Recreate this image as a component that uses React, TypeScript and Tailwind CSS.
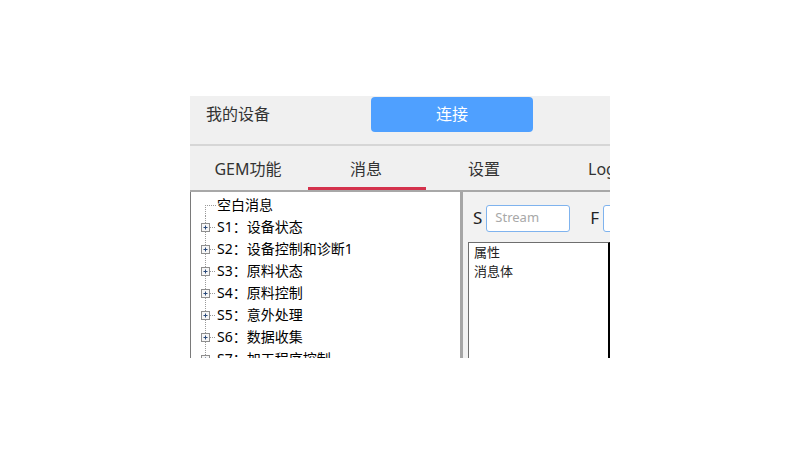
import React from 'react';

const TREE_ITEMS = [
  { label: '空白消息', leaf: true },
  { label: 'S1：设备状态' },
  { label: 'S2：设备控制和诊断1' },
  { label: 'S3：原料状态' },
  { label: 'S4：原料控制' },
  { label: 'S5：意外处理' },
  { label: 'S6：数据收集' },
  { label: 'S7：加工程序控制' },
];

const TABS = ['GEM功能', '消息', '设置', 'Log'];

function TreeConnector({ leaf, first }: { leaf?: boolean; first?: boolean }) {
  return (
    <svg width="26" height="22" viewBox="0 0 26 22" className="shrink-0">
      <line
        x1="14.5"
        y1={first ? 11 : 0}
        x2="14.5"
        y2="22"
        stroke="#9a9a9a"
        strokeWidth="1"
        strokeDasharray="1 1"
      />
      {leaf ? (
        <line x1="14" y1="11.5" x2="25" y2="11.5" stroke="#9a9a9a" strokeWidth="1" strokeDasharray="1 1" />
      ) : (
        <>
          <line x1="19" y1="11.5" x2="25" y2="11.5" stroke="#9a9a9a" strokeWidth="1" strokeDasharray="1 1" />
          <rect x="10.5" y="7.5" width="8" height="8" fill="#f6f6f6" stroke="#8e8e8e" strokeWidth="1" />
          <line x1="12.5" y1="11.5" x2="16.5" y2="11.5" stroke="#2a4a7a" strokeWidth="1" />
          <line x1="14.5" y1="9.5" x2="14.5" y2="13.5" stroke="#2a4a7a" strokeWidth="1" />
        </>
      )}
    </svg>
  );
}

export default function App() {
  return (
    <div className="w-[800px] h-[453px] bg-white pt-[96px] pl-[190px] font-['Noto_Sans','Noto_Sans_CJK_SC',sans-serif]">
      <div className="w-[420px] h-[262px] bg-[#f0f0f0] overflow-hidden flex flex-col">
        {/* Header */}
        <div className="h-[50px] shrink-0 flex items-start pt-[1px] border-b-2 border-[#d6d6d6]">
          <div className="w-[181px] pl-[16px] h-[35px] leading-[35px] text-[16px] text-[#333]">我的设备</div>
          <button className="w-[162px] h-[35px] rounded-[4px] bg-[#4fa0ff] text-white text-[16px] leading-[35px]">
            连接
          </button>
        </div>

        {/* Tabs */}
        <div className="h-[46px] shrink-0 flex border-b-2 border-[#a8a8a8]">
          {TABS.map((tab, i) => (
            <div
              key={tab}
              className={`w-[118px] shrink-0 flex items-center justify-center pt-[4px] pr-[2px] text-[16px] text-[#333] ${
                i === 1 ? 'border-b-[3px] border-[#d4324c]' : 'border-b-[3px] border-transparent'
              }`}
            >
              {tab}
            </div>
          ))}
        </div>

        {/* Body */}
        <div className="flex flex-1 min-h-0">
          {/* Tree */}
          <div className="w-[270px] shrink-0 bg-white border-l border-[#7a7a7a] pt-[2px] overflow-hidden">
            {TREE_ITEMS.map((item, i) => (
              <div key={item.label} className="h-[22px] flex items-center">
                <TreeConnector leaf={item.leaf} first={i === 0} />
                <span className="text-[14px] leading-[22px] text-black whitespace-nowrap">{item.label}</span>
              </div>
            ))}
          </div>
          <div className="w-[3px] shrink-0 bg-[#a6a6a6]" />

          {/* Right pane */}
          <div className="flex-1 min-w-0 flex flex-col bg-[#f2f2f2]">
            <div className="h-[50px] shrink-0 flex items-center pl-[10px] pt-[2px] gap-[4px] overflow-hidden">
              <span className="text-[17px] text-[#222] w-[10px]">S</span>
              <div className="w-[84px] h-[27px] shrink-0 rounded-[3px] border border-[#7fb3ee] bg-white flex items-center pl-[8px] text-[13px] text-[#a8a8a8]">
                Stream
              </div>
              <span className="text-[17px] text-[#222] ml-[16px] w-[10px]">F</span>
              <div className="w-[84px] h-[27px] shrink-0 rounded-[3px] border border-[#7fb3ee] bg-white" />
            </div>
            <div className="flex-1 ml-[5px] bg-white border-l border-t border-[#6e6e6e] border-r-2 border-r-black pl-[5px]">
              <div className="text-[13px] leading-[19px] text-[#222]">属性</div>
              <div className="text-[13px] leading-[19px] text-[#222]">消息体</div>
            </div>
          </div>
        </div>
      </div>
    </div>
  );
}
